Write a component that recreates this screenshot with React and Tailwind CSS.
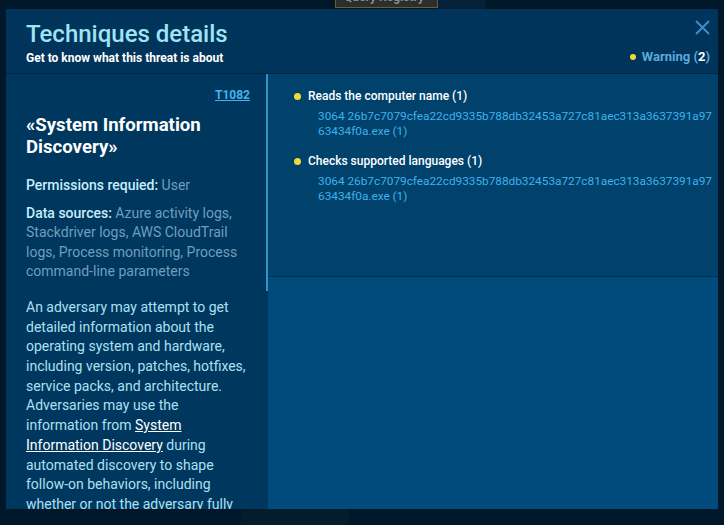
import React from "react";

function Dot() {
  return <span className="inline-block w-[7px] h-[7px] rounded-full bg-[#f2d93a] shrink-0" />;
}

function Item({ title, lines }) {
  return (
    <div className="flex flex-col">
      <div className="flex items-center gap-[7px] text-[12px] leading-[16px] font-medium text-white">
        <Dot />
        <span>{title}</span>
      </div>
      <div className="pl-[24px] mt-[5px] text-[11.8px] leading-[14.5px] text-[#3fb1ea]">
        {lines.map((l, i) => (
          <div key={i}>{l}</div>
        ))}
      </div>
    </div>
  );
}

export default function App() {
  const hash = "3064 26b7c7079cfea22cd9335b788db32453a727c81aec313a3637391a97";
  return (
    <div
      className="relative w-[724px] h-[525px] overflow-hidden bg-[#01182a] pt-[9px] px-[6px]"
      style={{ fontFamily: "Roboto, 'Noto Sans', sans-serif" }}
    >
      {/* background bits behind the modal */}
      <div className="absolute left-[437px] top-0 w-[48px] h-[9px] bg-[#05213a]" />
      <div className="absolute left-[241px] top-[509px] w-[108px] h-[16px] bg-[#041c2b]" />
      <div className="absolute left-[335px] top-0 w-[103px] h-[8px] overflow-hidden bg-[#2a2e2c] border border-t-0 border-[#6d5c2c]">
        <span className="absolute left-[8px] top-[-12px] text-[12px] font-bold text-[#8a8f8c] whitespace-nowrap">
          Query Registry
        </span>
      </div>

      <div className="relative w-[712px] h-[500px] flex flex-col bg-[#00345a]">
        {/* header */}
        <div className="h-[65px] shrink-0 flex justify-between border-b border-[#01263f] pl-[20px] pr-[8px]">
          <div className="flex flex-col pt-[11px]">
            <h1 className="text-[24px] leading-[28px] font-medium text-[#9fe4f4]">Techniques details</h1>
            <p className="mt-[3px] text-[12px] leading-[14px] font-bold text-white">
              Get to know what this threat is about
            </p>
          </div>
          <div className="flex flex-col items-end pt-[11px]">
            <svg width="15" height="15" viewBox="0 0 15 15">
              <path d="M1 1 L14 14 M14 1 L1 14" stroke="#3b8dcd" strokeWidth="2" fill="none" />
            </svg>
            <div className="mt-[14px] flex items-center gap-[6px] text-[13px] leading-[16px] font-bold text-[#5aaadd]">
              <span className="inline-block w-[6px] h-[6px] rounded-full bg-[#f2d93a]" />
              <span>
                Warning (<span className="text-white">2</span>)
              </span>
            </div>
          </div>
        </div>

        {/* body */}
        <div className="flex flex-1 min-h-0">
          {/* left panel */}
          <div className="relative w-[262px] shrink-0 bg-[#00375e] overflow-hidden">
            <div className="absolute right-0 top-0 w-[2px] h-[217px] bg-[#3b8fc9]" />
            <div className="pl-[20px] pr-[18px] pt-[13px]">
              <div className="flex justify-end">
                <span className="text-[12px] leading-[16px] font-bold underline text-[#45b3ee]">T1082</span>
              </div>
              <h2 className="mt-[11px] text-[18.6px] leading-[22px] font-bold text-white">
                «System Information Discovery»
              </h2>
              <p className="mt-[18px] text-[14px] leading-[19.6px] text-[#6f9ebf]">
                <span className="font-medium text-[#c6eefb]">Permissions requied:</span> User
              </p>
              <p className="mt-[8px] text-[14px] leading-[19.6px] text-[#6f9ebf]">
                <span className="font-medium text-[#c6eefb]">Data sources:</span> Azure activity logs,
                Stackdriver logs, AWS CloudTrail logs, Process monitoring, Process command-line
                parameters
              </p>
              <p className="mt-[16px] text-[14px] leading-[19.7px] text-[#ace0f3]">
                An adversary may attempt to get detailed information about the operating system and
                hardware, including version, patches, hotfixes, service packs, and architecture.
                Adversaries may use the information from{" "}
                <span className="underline text-white">System Information Discovery</span> during
                automated discovery to shape follow-on behaviors, including whether or not the
                adversary fully infects the target and/or attempts specific actions.
              </p>
            </div>
          </div>

          {/* right panel */}
          <div className="flex-1 flex flex-col bg-[#004a7c]">
            <div className="h-[203px] shrink-0 bg-[#00426c] border-b border-[#01304f] pl-[26px] pt-[14px] flex flex-col gap-[15px]">
              <Item title="Reads the computer name (1)" lines={[hash, "63434f0a.exe (1)"]} />
              <Item title="Checks supported languages (1)" lines={[hash, "63434f0a.exe (1)"]} />
            </div>
          </div>
        </div>
      </div>
    </div>
  );
}
